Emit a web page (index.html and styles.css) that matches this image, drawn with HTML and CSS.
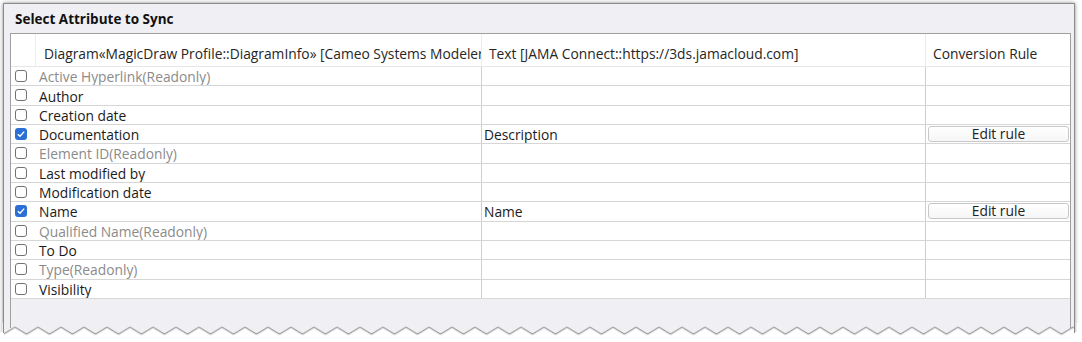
FILE: index.html
```html
<!DOCTYPE html>
<html lang="en">
  <head>
    <meta charset="UTF-8" />
    <title>Select Attribute to Sync</title>
    <link rel="stylesheet" href="styles.css">
  </head>
  <body>
    <div class="window">
      <div class="title">Select Attribute to Sync</div>

      <div class="grid">
        <div class="row head">
          <div class="c0"></div>
          <div class="c1">Diagram«MagicDraw Profile::DiagramInfo» [Cameo Systems Modeler]</div>
          <div class="c2">Text [JAMA Connect::https://3ds.jamacloud.com]</div>
          <div class="c3">Conversion Rule</div>
        </div>

        <div class="row">
          <div class="c0"><span class="cb"></span></div>
          <div class="c1 ro">Active Hyperlink(Readonly)</div>
          <div class="c2"></div>
          <div class="c3"></div>
        </div>
        <div class="row">
          <div class="c0"><span class="cb"></span></div>
          <div class="c1">Author</div>
          <div class="c2"></div>
          <div class="c3"></div>
        </div>
        <div class="row">
          <div class="c0"><span class="cb"></span></div>
          <div class="c1">Creation date</div>
          <div class="c2"></div>
          <div class="c3"></div>
        </div>
        <div class="row">
          <div class="c0">
            <span class="cb on">
              <svg viewBox="0 0 12 12" width="12" height="12"><path d="M2.8 6.2 L5 8.3 L9.2 3.6" /></svg>
            </span>
          </div>
          <div class="c1">Documentation</div>
          <div class="c2">Description</div>
          <div class="c3"><button class="rule-btn">Edit rule</button></div>
        </div>
        <div class="row">
          <div class="c0"><span class="cb"></span></div>
          <div class="c1 ro">Element ID(Readonly)</div>
          <div class="c2"></div>
          <div class="c3"></div>
        </div>
        <div class="row">
          <div class="c0"><span class="cb"></span></div>
          <div class="c1">Last modified by</div>
          <div class="c2"></div>
          <div class="c3"></div>
        </div>
        <div class="row">
          <div class="c0"><span class="cb"></span></div>
          <div class="c1">Modification date</div>
          <div class="c2"></div>
          <div class="c3"></div>
        </div>
        <div class="row">
          <div class="c0">
            <span class="cb on">
              <svg viewBox="0 0 12 12" width="12" height="12"><path d="M2.8 6.2 L5 8.3 L9.2 3.6" /></svg>
            </span>
          </div>
          <div class="c1">Name</div>
          <div class="c2">Name</div>
          <div class="c3"><button class="rule-btn">Edit rule</button></div>
        </div>
        <div class="row">
          <div class="c0"><span class="cb"></span></div>
          <div class="c1 ro">Qualified Name(Readonly)</div>
          <div class="c2"></div>
          <div class="c3"></div>
        </div>
        <div class="row">
          <div class="c0"><span class="cb"></span></div>
          <div class="c1">To Do</div>
          <div class="c2"></div>
          <div class="c3"></div>
        </div>
        <div class="row">
          <div class="c0"><span class="cb"></span></div>
          <div class="c1 ro">Type(Readonly)</div>
          <div class="c2"></div>
          <div class="c3"></div>
        </div>
        <div class="row">
          <div class="c0"><span class="cb"></span></div>
          <div class="c1">Visibility</div>
          <div class="c2"></div>
          <div class="c3"></div>
        </div>

        <div class="empty"></div>
      </div>

      <!-- torn bottom edge of the screenshot -->
      <svg class="tear" width="1082" height="19" viewBox="0 0 1082 19">
        <defs>
          <pattern id="zz" x="3.5" y="0" width="23" height="19" patternUnits="userSpaceOnUse">
            <polygon points="0,0 23,0 23,11 11.5,4 0,11" fill="#f0eff3" />
            <polyline points="0,12 11.5,5 23,12" fill="none" stroke="rgba(0,0,0,0.12)" stroke-width="1.2" />
            <polyline points="0,11 11.5,4 23,11" fill="none" stroke="#8e8e8e" stroke-width="1" />
          </pattern>
        </defs>
        <rect x="0" y="0" width="1082" height="19" fill="#fff" />
        <line x1="1.5" y1="0" x2="1.5" y2="9" stroke="rgba(0,0,0,0.12)" stroke-width="2" />
        <line x1="3.5" y1="0" x2="3.5" y2="10" stroke="#8a8a8a" />
        <line x1="1075.5" y1="0" x2="1075.5" y2="9" stroke="rgba(0,0,0,0.15)" stroke-width="2" />
        <line x1="1074.5" y1="0" x2="1074.5" y2="10" stroke="#8a8a8a" />
        <rect x="4" y="0" width="1070" height="19" fill="url(#zz)" />
        <line x1="10.5" y1="0" x2="10.5" y2="5" stroke="#a0a0a0" />
        <line x1="1070.5" y1="0" x2="1070.5" y2="5" stroke="#a0a0a0" />
      </svg>
    </div>
  </body>
</html>
```

FILE: styles.css
```css
html,
body {
  margin: 0;
  overflow: hidden;
  background: #fff;
}
body {
  padding: 3px 0 0 3px;
  font-family: "Open Sans", "Noto Sans", sans-serif;
  font-size: 13.8px;
  color: #1b1b1b;
}
.window {
  width: 1070px;
  border: 1px solid #8a8a8a;
  border-bottom: none;
  background: #f0eff3;
  box-shadow: 0 0 4px rgba(0, 0, 0, 0.45);
}
.title {
  height: 29px;
  box-sizing: border-box;
  padding: 1px 0 0 11px;
  display: flex;
  align-items: center;
  font-weight: 700;
  font-size: 13.5px;
  color: #111;
}
.grid {
  margin: 0 3px 0 6px;
  border: 1px solid #a0a0a0;
  border-bottom: none;
  background: #f0eff3;
}
.row {
  display: grid;
  grid-template-columns: 25px 446px 444px 144px;
  height: 19.33px;
  box-sizing: border-box;
  border-bottom: 1px solid #d6d6d6;
  background: #fff;
}
.row > div {
  display: flex;
  align-items: center;
  min-width: 0;
  overflow: hidden;
  white-space: nowrap;
  box-sizing: border-box;
}
.c1 {
  padding: 1px 0 0 3px;
  border-right: 1px solid #cfcfcf;
}
.c2 {
  padding: 1px 0 0 2px;
  border-right: 1px solid #cfcfcf;
}
.c3 {
  padding: 0 1px 0 2px;
}
.ro {
  color: #8b8b8b;
}
.head {
  height: 33px;
  border-bottom-color: #e6e6e6;
  color: #262626;
}
.head > div {
  padding-top: 7px;
}
.head .c0 {
  border-right: 1px solid #ededed;
}
.head .c1 {
  padding-left: 8px;
  border-right-color: #ececec;
}
.head .c2 {
  padding-left: 7px;
  border-right-color: #ececec;
}
.head .c3 {
  padding-left: 7px;
}
.cb {
  display: block;
  width: 12px;
  height: 12px;
  margin-left: 4px;
  box-sizing: border-box;
  border: 1px solid #727272;
  border-radius: 3px;
  background: #fff;
}
.cb.on {
  border: none;
  background: #2b6fd6;
}
.cb svg {
  display: block;
}
.cb path {
  fill: none;
  stroke: #fff;
  stroke-width: 1.4;
}
.rule-btn {
  width: 100%;
  height: 16px;
  padding: 0;
  border: 1px solid #c8c8c8;
  border-radius: 3px;
  background: linear-gradient(#ffffff, #f6f6f7);
  font-family: inherit;
  font-size: 13.8px;
  line-height: 14px;
  color: #222;
}
.empty {
  height: 35px;
}
.tear {
  display: block;
  margin: -11px 0 0 -4px;
}
```
